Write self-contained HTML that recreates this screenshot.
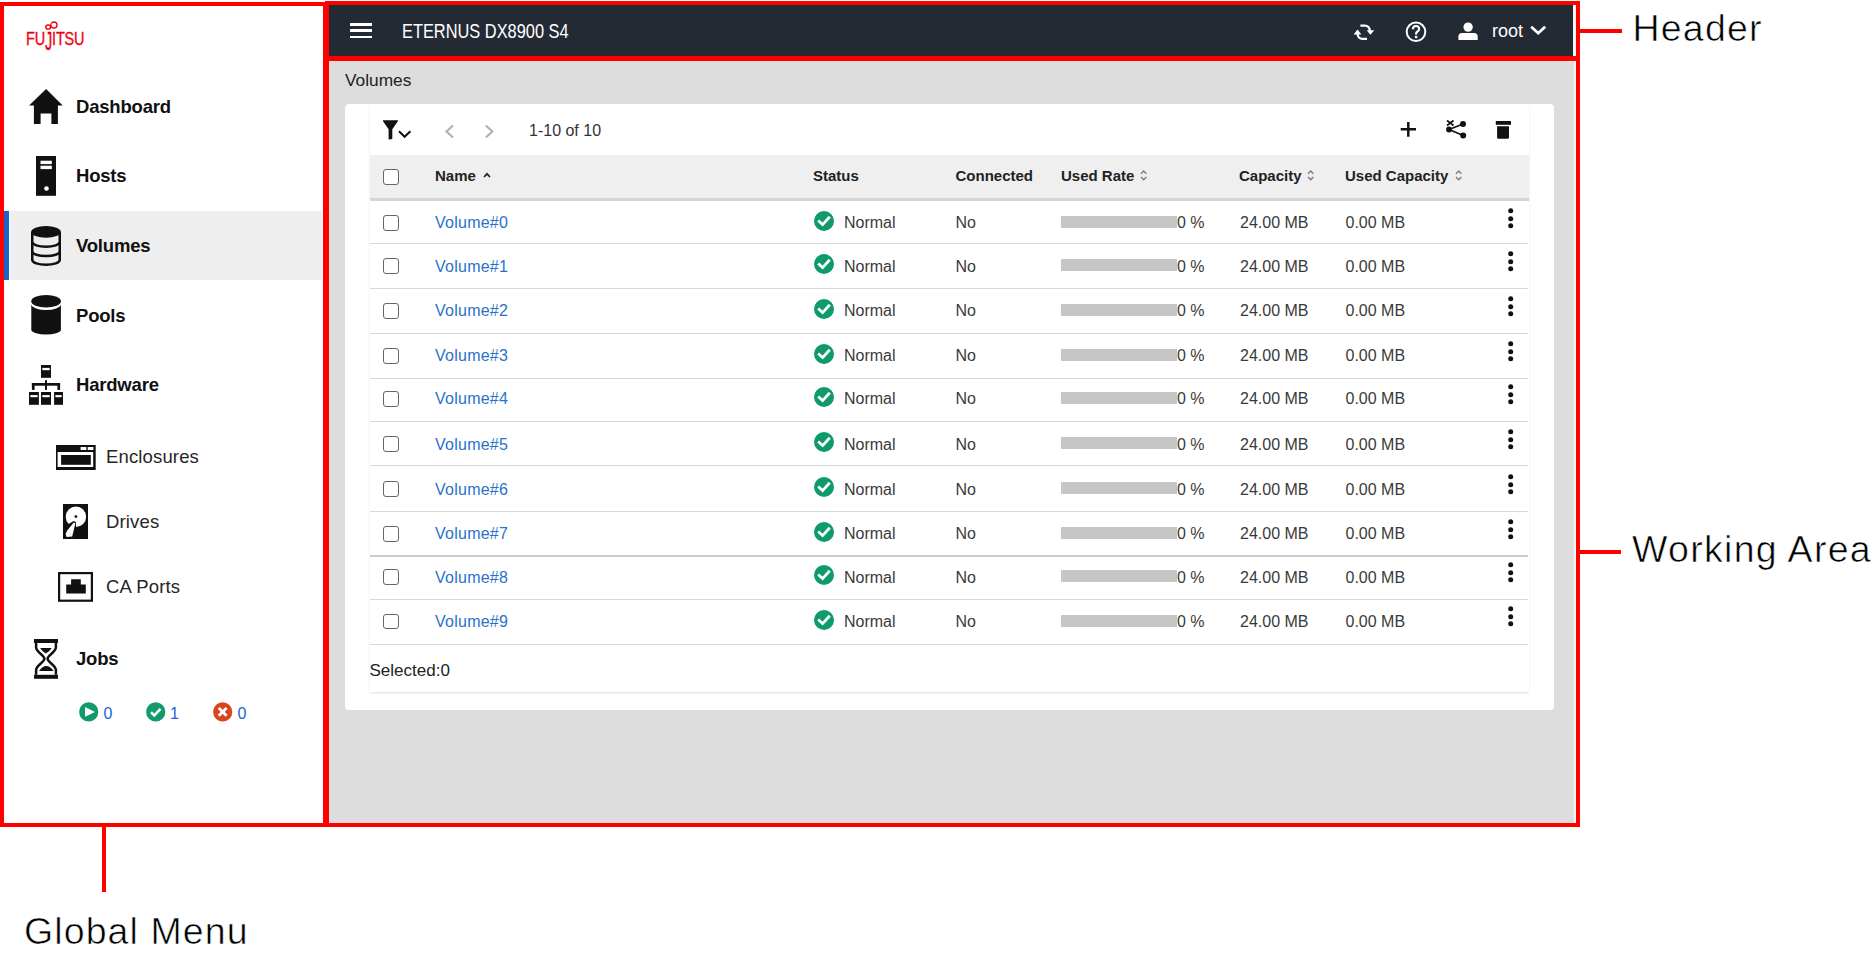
<!DOCTYPE html>
<html><head><meta charset="utf-8">
<style>
*{box-sizing:border-box;margin:0;padding:0}
html,body{width:1874px;height:955px;overflow:hidden;background:#fff;font-family:"Liberation Sans",sans-serif}
.a{position:absolute}
.t{position:absolute;white-space:nowrap;line-height:1}
.box{position:absolute;border:4.5px solid #ff0000}
/* sidebar */
.nav{font-weight:bold;font-size:18.5px;color:#111;letter-spacing:-0.2px}
.sub{font-size:18.5px;color:#262626;letter-spacing:0.15px}
.ann{font-size:37.5px;color:#000;letter-spacing:1.2px;-webkit-text-stroke:0.6px #fff}
.hd{font-weight:bold;font-size:15px;color:#222}
.cell{font-size:16px;color:#3a3a3a}
.link{color:#2a72c8;letter-spacing:0.25px}
.cb{position:absolute;width:15.5px;height:15.5px;border:1.6px solid #666;border-radius:3px;background:#fff}
.sep{position:absolute;left:370px;width:1158px;height:1px;background:#d6d9dc}
.bar{position:absolute;left:1061px;width:116px;height:12px;background:#c6c6c6}
</style></head><body>

<!-- ============ SIDEBAR ============ -->
<div class="a" style="left:4px;top:211px;width:5px;height:69px;background:#1a64c8"></div>
<div class="a" style="left:10px;top:211px;width:312px;height:69px;background:#eeeeee"></div>

<!-- logo -->
<div class="t" style="left:25.5px;top:29.3px;font-size:19px;color:#ee0011;transform:scaleX(0.76);transform-origin:0 0;letter-spacing:-0.2px;-webkit-text-stroke:0.35px #ee0011">FU<span style="display:inline-block;transform:scaleY(1.36);transform-origin:50% 16%">J</span>ITSU</div>
<svg class="a" style="left:44px;top:19px" width="15" height="12" viewBox="0 0 15 12"><circle cx="9.9" cy="6.1" r="3.1" fill="none" stroke="#ee0011" stroke-width="1.3"/><ellipse cx="4.15" cy="8.05" rx="2.4" ry="2.1" fill="none" stroke="#ee0011" stroke-width="1.4"/></svg>
<div class="t nav" style="left:76px;top:98.1px">Dashboard</div>
<div class="t nav" style="left:76px;top:167.2px">Hosts</div>
<div class="t nav" style="left:76px;top:237.2px">Volumes</div>
<div class="t nav" style="left:76px;top:307.2px">Pools</div>
<div class="t nav" style="left:76px;top:376.4px">Hardware</div>
<div class="t sub" style="left:106px;top:448.2px">Enclosures</div>
<div class="t sub" style="left:106px;top:513.0px">Drives</div>
<div class="t sub" style="left:106px;top:578.0px">CA Ports</div>
<div class="t nav" style="left:76px;top:650.2px">Jobs</div>

<!-- sidebar icons -->
<svg class="a" style="left:28px;top:88px" width="36" height="37" viewBox="0 0 36 37"><path d="M18.1 1.1 L34.7 17.4 L29.9 17.4 L29.9 35.9 L23.4 35.9 L23.4 25.5 L12.6 25.5 L12.6 35.9 L5.9 35.9 L5.9 17.4 L1.1 17.4 Z" fill="#111"/></svg>
<svg class="a" style="left:36px;top:156px" width="20" height="40" viewBox="0 0 20 40"><rect x="0" y="0" width="20" height="39.8" fill="#111"/><rect x="4.5" y="4.7" width="11.3" height="3.4" fill="#fff"/><rect x="4.5" y="9.7" width="11.3" height="3.4" fill="#fff"/><circle cx="10.5" cy="32.5" r="2.3" fill="#fff"/></svg>
<svg class="a" style="left:31px;top:226px" width="30" height="41" viewBox="0 0 30 41"><ellipse cx="15" cy="5.9" rx="14.9" ry="5.9" fill="#111"/><path d="M1.25 5.9 V34 A13.75 4.8 0 0 0 28.75 34 V5.9" fill="none" stroke="#111" stroke-width="2.5"/><path d="M1.25 16 A13.75 4.7 0 0 0 28.75 16" fill="none" stroke="#111" stroke-width="2.5"/><path d="M1.25 25.4 A13.75 4.7 0 0 0 28.75 25.4" fill="none" stroke="#111" stroke-width="2.5"/></svg>
<svg class="a" style="left:31px;top:294px" width="31" height="42" viewBox="0 0 31 42"><path d="M0.3 10.5 A14.85 6 0 0 0 29.9 10.5 L29.9 36 A14.85 4.8 0 0 1 0.3 36 Z" fill="#111"/><ellipse cx="15.1" cy="7.25" rx="14.85" ry="6.25" fill="#111"/></svg>
<svg class="a" style="left:28px;top:364px" width="36" height="42" viewBox="0 0 36 42"><g fill="#111"><rect x="13" y="1" width="10" height="12.8"/><rect x="17" y="16.2" width="2" height="9.7"/><rect x="3.9" y="19" width="28.2" height="2.7"/><rect x="3.9" y="19" width="2.7" height="6.9"/><rect x="29.4" y="19" width="2.7" height="6.9"/><rect x="1" y="28" width="9.9" height="12.8"/><rect x="13" y="28" width="10" height="12.8"/><rect x="26.1" y="28" width="8.9" height="12.8"/></g><g fill="#fff"><rect x="14.3" y="3.9" width="7.4" height="2.3"/><rect x="2.3" y="31.1" width="7.3" height="2.1"/><rect x="14.3" y="31.1" width="7.4" height="2.1"/><rect x="27.4" y="31.1" width="6.3" height="2.1"/></g></svg>
<svg class="a" style="left:56px;top:445px" width="40" height="25" viewBox="0 0 40 25"><rect x="0" y="0" width="39.7" height="25" fill="#111"/><rect x="1.6" y="7" width="35.6" height="15" fill="#fff"/><rect x="5.1" y="10" width="29.7" height="9.8" fill="#111"/><rect x="24.6" y="2" width="5.7" height="3" fill="#fff"/><rect x="31.7" y="2" width="5.7" height="3" fill="#fff"/></svg>
<svg class="a" style="left:63px;top:504px" width="25" height="35" viewBox="0 0 25 35"><rect x="0" y="0" width="25" height="35" fill="#111"/><circle cx="12.9" cy="12.7" r="10.2" fill="#fff"/><path d="M5.5 19.9 L10.7 17.0 L13.0 18.0 L13.0 24 L5 24 Z" fill="#111"/><path d="M10.8 18.6 L12.4 19.2 L9.2 32.6 L3.6 33 L2.6 30 L4.2 26.5 Z" fill="#fff"/><circle cx="12.9" cy="12.6" r="1.4" fill="#111"/></svg>
<svg class="a" style="left:58px;top:572px" width="35" height="30" viewBox="0 0 35 30"><rect x="1.1" y="1.1" width="32.8" height="27.6" fill="#fff" stroke="#111" stroke-width="2.2"/><path d="M13.1 7.2 H22.8 V12.4 H27.8 V21.6 H8.2 V12.4 H13.1 Z" fill="#111"/></svg>
<svg class="a" style="left:34px;top:639px" width="24" height="40" viewBox="0 0 24 40"><rect x="0" y="0" width="24" height="4" fill="#111"/><rect x="0" y="35.8" width="24" height="4" fill="#111"/><path d="M2.1 4 V8.5 C2.1 13 10.4 16.5 10.4 19.7 C10.4 23 2.1 26.5 2.1 31 V35.8" fill="none" stroke="#111" stroke-width="2.5"/><path d="M21.9 4 V8.5 C21.9 13 13.6 16.5 13.6 19.7 C13.6 23 21.9 26.5 21.9 31 V35.8" fill="none" stroke="#111" stroke-width="2.5"/><path d="M6.1 8.9 H17.7 Q15 13 11.9 14.6 Q8.8 13 6.1 8.9 Z" fill="#111"/><path d="M5 31.9 H19.7 Q16 27 12.3 27 Q8.6 27 5 31.9 Z" fill="#111"/></svg>
<!-- job status -->
<svg class="a" style="left:79px;top:702px" width="20" height="20" viewBox="0 0 20 20"><circle cx="9.7" cy="9.9" r="9.6" fill="#119a6d"/><path d="M6 5 L6 14.7 L16 9.9 Z" fill="#fff"/></svg>
<div class="t" style="left:103.5px;top:705.9px;font-size:16px;color:#2461d6">0</div>
<svg class="a" style="left:146px;top:702px" width="20" height="20" viewBox="0 0 20 20"><circle cx="9.7" cy="9.9" r="9.6" fill="#119a6d"/><path d="M5 10.3 L8.3 13.4 L14.5 6.8" fill="none" stroke="#fff" stroke-width="2.6"/></svg>
<div class="t" style="left:170px;top:705.9px;font-size:16px;color:#2461d6">1</div>
<svg class="a" style="left:213px;top:702px" width="20" height="20" viewBox="0 0 20 20"><circle cx="9.7" cy="9.9" r="9.6" fill="#d9441c"/><path d="M5.8 6 L13.6 13.8 M13.6 6 L5.8 13.8" fill="none" stroke="#fff" stroke-width="2.8"/></svg>
<div class="t" style="left:237.5px;top:705.9px;font-size:16px;color:#2461d6">0</div>


<!-- ============ HEADER ============ -->
<div class="a" style="left:329px;top:5px;width:1244px;height:51px;background:#232a34"></div>
<div class="a" style="left:329px;top:60px;width:1247px;height:763px;background:#dddddd"></div>

<div class="a" style="left:350px;top:23px;width:21.5px;height:2.6px;background:#fff"></div>
<div class="a" style="left:350px;top:29.3px;width:21.5px;height:2.6px;background:#fff"></div>
<div class="a" style="left:350px;top:35.5px;width:21.5px;height:2.6px;background:#fff"></div>
<div class="t" style="left:402px;top:20.2px;font-size:21px;color:#fff;transform:scaleX(0.78);transform-origin:0 0">ETERNUS DX8900 S4</div>
<div class="t" style="left:1492px;top:21.5px;font-size:18px;color:#fff">root</div>

<!-- header icons -->
<svg class="a" style="left:1353px;top:23.5px" width="22" height="17" viewBox="0 0 22 17"><g fill="none" stroke="#fff" stroke-width="2.3"><path d="M7.4 1.6 H12 A4.8 4.8 0 0 1 16.8 6.4 V7"/><path d="M14 14.8 H9.4 A4.8 4.8 0 0 1 4.6 10 V9.4"/></g><g fill="#fff"><path d="M13.6 6.2 H21.3 L17.4 10.8 Z"/><path d="M0.6 10.4 H8.4 L4.5 5.6 Z"/></g></svg>
<svg class="a" style="left:1405px;top:21px" width="22" height="22" viewBox="0 0 22 22"><circle cx="11" cy="10.8" r="9.3" fill="none" stroke="#fff" stroke-width="2"/><path d="M7.9 8.2 Q7.9 5 11 5 Q14.1 5 14.1 7.9 Q14.1 9.5 12.4 10.5 Q11.1 11.3 11.1 12.8 V13.4" fill="none" stroke="#fff" stroke-width="2.2"/><rect x="9.9" y="14.8" width="2.4" height="2.4" fill="#fff"/></svg>
<svg class="a" style="left:1458px;top:22px" width="20" height="18" viewBox="0 0 20 18"><circle cx="10.1" cy="5.1" r="4.7" fill="#fff"/><path d="M0.4 17.9 V14.5 Q0.4 10.9 4 10.9 H16 Q19.7 10.9 19.7 14.5 V17.9 Z" fill="#fff"/></svg>
<svg class="a" style="left:1529px;top:24px" width="19" height="12" viewBox="0 0 19 12"><path d="M2.2 2.8 L9.2 9.2 L16.2 2.8" fill="none" stroke="#fff" stroke-width="2.8"/></svg>
<!-- ============ WORK AREA ============ -->
<div class="t" style="left:345px;top:71.6px;font-size:17.3px;color:#222">Volumes</div>
<div class="a" style="left:345px;top:104px;width:1209px;height:606px;background:#fff;border-radius:4px"></div>
<div class="a" style="left:370px;top:104px;width:1158.5px;height:587.5px;background:#fff;box-shadow:0 1px 2px rgba(0,0,0,0.12)"></div>
<div class="a" style="left:370px;top:154.5px;width:1158.5px;height:44px;background:#efefef"></div>
<div class="a" style="left:370px;top:198px;width:1158.5px;height:3px;background:#d2d6da"></div>

<div class="t" style="left:529px;top:123.4px;font-size:16px;color:#333">1-10 of 10</div>

<div class="cb" style="left:383.3px;top:169.2px"></div>
<div class="t hd" style="left:435px;top:168.1px">Name</div>
<div class="t hd" style="left:813px;top:168.4px">Status</div>
<div class="t hd" style="left:955.5px;top:168.4px">Connected</div>
<div class="t hd" style="left:1061px;top:168.4px">Used Rate</div>
<div class="t hd" style="left:1239px;top:168.4px">Capacity</div>
<div class="t hd" style="left:1345px;top:168.4px">Used Capacity</div>

<!-- toolbar icons -->
<svg class="a" style="left:382px;top:119px" width="31" height="21" viewBox="0 0 31 21"><path d="M1 1.2 H15.9 V2.2 L10.3 10.3 V20 L6.6 20.4 V10.3 L1 2.2 Z" fill="#111"/><path d="M17 12.2 L22.6 17.8 L28.4 12.2" fill="none" stroke="#111" stroke-width="2"/></svg>
<svg class="a" style="left:443px;top:123px" width="14" height="17" viewBox="0 0 14 17"><path d="M10 2.5 L3.5 8.5 L10 14.5" fill="none" stroke="#abb3bb" stroke-width="2.2"/></svg>
<svg class="a" style="left:482px;top:123px" width="14" height="17" viewBox="0 0 14 17"><path d="M3.8 2.5 L10.3 8.5 L3.8 14.5" fill="none" stroke="#abb3bb" stroke-width="2.2"/></svg>
<svg class="a" style="left:1400px;top:121px" width="17" height="17" viewBox="0 0 17 17"><path d="M8.3 1 V15.8 M0.7 8.3 H16" fill="none" stroke="#111" stroke-width="2.5"/></svg>
<svg class="a" style="left:1445px;top:119px" width="23" height="21" viewBox="0 0 23 21"><g fill="#111"><circle cx="4" cy="10.5" r="2.9"/><circle cx="18" cy="5" r="3"/><circle cx="18.2" cy="16.6" r="3"/></g><path d="M4 10.5 L18 5 M4 10.5 L18.2 16.6" stroke="#111" stroke-width="1.6"/><path d="M2 1.5 L8.5 6.5 M8.5 1.5 L2 6.5" stroke="#111" stroke-width="1.6"/></svg>
<svg class="a" style="left:1495px;top:120px" width="17" height="20" viewBox="0 0 17 20"><rect x="0.8" y="1" width="15.2" height="3.8" fill="#111"/><path d="M2.1 6.2 H14 V17.2 Q14 18.7 12.5 18.7 H3.6 Q2.1 18.7 2.1 17.2 Z" fill="#111"/></svg>
<!-- sort icons -->
<svg class="a" style="left:482px;top:171px" width="10" height="8" viewBox="0 0 10 8"><path d="M2 6 L5 2.8 L8 6" fill="none" stroke="#222" stroke-width="1.7"/></svg>
<svg class="a" style="left:1139px;top:168px" width="10" height="15" viewBox="0 0 10 15"><path d="M2 5.8 L4.7 3 L7.4 5.8 M2 9 L4.7 11.8 L7.4 9" fill="none" stroke="#7a7a7a" stroke-width="1.3"/></svg>
<svg class="a" style="left:1306px;top:168px" width="10" height="15" viewBox="0 0 10 15"><path d="M2 5.8 L4.7 3 L7.4 5.8 M2 9 L4.7 11.8 L7.4 9" fill="none" stroke="#7a7a7a" stroke-width="1.3"/></svg>
<svg class="a" style="left:1453.5px;top:168px" width="10" height="15" viewBox="0 0 10 15"><path d="M2 5.8 L4.7 3 L7.4 5.8 M2 9 L4.7 11.8 L7.4 9" fill="none" stroke="#7a7a7a" stroke-width="1.3"/></svg>


<!-- ROWS -->
<div class="cb" style="left:383.3px;top:215.10px"></div>
<div class="t cell link" style="left:435px;top:214.75px">Volume#0</div>
<svg class="a" style="left:813.8px;top:210.70px" width="20" height="20" viewBox="0 0 20 20"><circle cx="10" cy="10" r="10" fill="#0f9a6c"/><path d="M5.2 10.4 L8.6 13.6 L14.8 6.8" fill="none" stroke="#fff" stroke-width="2.8" stroke-linecap="square"/></svg>
<div class="t cell" style="left:844px;top:214.75px">Normal</div>
<div class="t cell" style="left:955.5px;top:214.75px">No</div>
<div class="bar" style="top:215.70px"></div>
<div class="t cell" style="left:1177px;top:214.75px">0 %</div>
<div class="t cell" style="left:1240px;top:214.75px">24.00 MB</div>
<div class="t cell" style="left:1345.5px;top:214.75px">0.00 MB</div>
<svg class="a" style="left:1508px;top:207.60px" width="6" height="21" viewBox="0 0 6 21"><circle cx="2.7" cy="2.8" r="2.5" fill="#111"/><circle cx="2.7" cy="10.7" r="2.5" fill="#111"/><circle cx="2.7" cy="17.7" r="2.5" fill="#111"/></svg>
<div class="sep" style="top:242.60px;height:1px;background:#d6d9dc"></div>
<div class="cb" style="left:383.3px;top:258.40px"></div>
<div class="t cell link" style="left:435px;top:258.50px">Volume#1</div>
<svg class="a" style="left:813.8px;top:254.00px" width="20" height="20" viewBox="0 0 20 20"><circle cx="10" cy="10" r="10" fill="#0f9a6c"/><path d="M5.2 10.4 L8.6 13.6 L14.8 6.8" fill="none" stroke="#fff" stroke-width="2.8" stroke-linecap="square"/></svg>
<div class="t cell" style="left:844px;top:258.50px">Normal</div>
<div class="t cell" style="left:955.5px;top:258.50px">No</div>
<div class="bar" style="top:259.00px"></div>
<div class="t cell" style="left:1177px;top:258.50px">0 %</div>
<div class="t cell" style="left:1240px;top:258.50px">24.00 MB</div>
<div class="t cell" style="left:1345.5px;top:258.50px">0.00 MB</div>
<svg class="a" style="left:1508px;top:250.90px" width="6" height="21" viewBox="0 0 6 21"><circle cx="2.7" cy="2.8" r="2.5" fill="#111"/><circle cx="2.7" cy="10.7" r="2.5" fill="#111"/><circle cx="2.7" cy="17.7" r="2.5" fill="#111"/></svg>
<div class="sep" style="top:287.90px;height:1px;background:#d6d9dc"></div>
<div class="cb" style="left:383.3px;top:303.00px"></div>
<div class="t cell link" style="left:435px;top:303.05px">Volume#2</div>
<svg class="a" style="left:813.8px;top:298.60px" width="20" height="20" viewBox="0 0 20 20"><circle cx="10" cy="10" r="10" fill="#0f9a6c"/><path d="M5.2 10.4 L8.6 13.6 L14.8 6.8" fill="none" stroke="#fff" stroke-width="2.8" stroke-linecap="square"/></svg>
<div class="t cell" style="left:844px;top:303.05px">Normal</div>
<div class="t cell" style="left:955.5px;top:303.05px">No</div>
<div class="bar" style="top:303.60px"></div>
<div class="t cell" style="left:1177px;top:303.05px">0 %</div>
<div class="t cell" style="left:1240px;top:303.05px">24.00 MB</div>
<div class="t cell" style="left:1345.5px;top:303.05px">0.00 MB</div>
<svg class="a" style="left:1508px;top:295.50px" width="6" height="21" viewBox="0 0 6 21"><circle cx="2.7" cy="2.8" r="2.5" fill="#111"/><circle cx="2.7" cy="10.7" r="2.5" fill="#111"/><circle cx="2.7" cy="17.7" r="2.5" fill="#111"/></svg>
<div class="sep" style="top:332.90px;height:1px;background:#d6d9dc"></div>
<div class="cb" style="left:383.3px;top:348.00px"></div>
<div class="t cell link" style="left:435px;top:347.95px">Volume#3</div>
<svg class="a" style="left:813.8px;top:343.60px" width="20" height="20" viewBox="0 0 20 20"><circle cx="10" cy="10" r="10" fill="#0f9a6c"/><path d="M5.2 10.4 L8.6 13.6 L14.8 6.8" fill="none" stroke="#fff" stroke-width="2.8" stroke-linecap="square"/></svg>
<div class="t cell" style="left:844px;top:347.95px">Normal</div>
<div class="t cell" style="left:955.5px;top:347.95px">No</div>
<div class="bar" style="top:348.60px"></div>
<div class="t cell" style="left:1177px;top:347.95px">0 %</div>
<div class="t cell" style="left:1240px;top:347.95px">24.00 MB</div>
<div class="t cell" style="left:1345.5px;top:347.95px">0.00 MB</div>
<svg class="a" style="left:1508px;top:340.50px" width="6" height="21" viewBox="0 0 6 21"><circle cx="2.7" cy="2.8" r="2.5" fill="#111"/><circle cx="2.7" cy="10.7" r="2.5" fill="#111"/><circle cx="2.7" cy="17.7" r="2.5" fill="#111"/></svg>
<div class="sep" style="top:377.90px;height:1px;background:#d6d9dc"></div>
<div class="cb" style="left:383.3px;top:391.30px"></div>
<div class="t cell link" style="left:435px;top:391.40px">Volume#4</div>
<svg class="a" style="left:813.8px;top:386.90px" width="20" height="20" viewBox="0 0 20 20"><circle cx="10" cy="10" r="10" fill="#0f9a6c"/><path d="M5.2 10.4 L8.6 13.6 L14.8 6.8" fill="none" stroke="#fff" stroke-width="2.8" stroke-linecap="square"/></svg>
<div class="t cell" style="left:844px;top:391.40px">Normal</div>
<div class="t cell" style="left:955.5px;top:391.40px">No</div>
<div class="bar" style="top:391.90px"></div>
<div class="t cell" style="left:1177px;top:391.40px">0 %</div>
<div class="t cell" style="left:1240px;top:391.40px">24.00 MB</div>
<div class="t cell" style="left:1345.5px;top:391.40px">0.00 MB</div>
<svg class="a" style="left:1508px;top:383.80px" width="6" height="21" viewBox="0 0 6 21"><circle cx="2.7" cy="2.8" r="2.5" fill="#111"/><circle cx="2.7" cy="10.7" r="2.5" fill="#111"/><circle cx="2.7" cy="17.7" r="2.5" fill="#111"/></svg>
<div class="sep" style="top:420.70px;height:1px;background:#d6d9dc"></div>
<div class="cb" style="left:383.3px;top:436.40px"></div>
<div class="t cell link" style="left:435px;top:436.75px">Volume#5</div>
<svg class="a" style="left:813.8px;top:432.00px" width="20" height="20" viewBox="0 0 20 20"><circle cx="10" cy="10" r="10" fill="#0f9a6c"/><path d="M5.2 10.4 L8.6 13.6 L14.8 6.8" fill="none" stroke="#fff" stroke-width="2.8" stroke-linecap="square"/></svg>
<div class="t cell" style="left:844px;top:436.75px">Normal</div>
<div class="t cell" style="left:955.5px;top:436.75px">No</div>
<div class="bar" style="top:437.00px"></div>
<div class="t cell" style="left:1177px;top:436.75px">0 %</div>
<div class="t cell" style="left:1240px;top:436.75px">24.00 MB</div>
<div class="t cell" style="left:1345.5px;top:436.75px">0.00 MB</div>
<svg class="a" style="left:1508px;top:428.90px" width="6" height="21" viewBox="0 0 6 21"><circle cx="2.7" cy="2.8" r="2.5" fill="#111"/><circle cx="2.7" cy="10.7" r="2.5" fill="#111"/><circle cx="2.7" cy="17.7" r="2.5" fill="#111"/></svg>
<div class="sep" style="top:465.30px;height:1px;background:#d6d9dc"></div>
<div class="cb" style="left:383.3px;top:481.40px"></div>
<div class="t cell link" style="left:435px;top:481.50px">Volume#6</div>
<svg class="a" style="left:813.8px;top:477.00px" width="20" height="20" viewBox="0 0 20 20"><circle cx="10" cy="10" r="10" fill="#0f9a6c"/><path d="M5.2 10.4 L8.6 13.6 L14.8 6.8" fill="none" stroke="#fff" stroke-width="2.8" stroke-linecap="square"/></svg>
<div class="t cell" style="left:844px;top:481.50px">Normal</div>
<div class="t cell" style="left:955.5px;top:481.50px">No</div>
<div class="bar" style="top:482.00px"></div>
<div class="t cell" style="left:1177px;top:481.50px">0 %</div>
<div class="t cell" style="left:1240px;top:481.50px">24.00 MB</div>
<div class="t cell" style="left:1345.5px;top:481.50px">0.00 MB</div>
<svg class="a" style="left:1508px;top:473.90px" width="6" height="21" viewBox="0 0 6 21"><circle cx="2.7" cy="2.8" r="2.5" fill="#111"/><circle cx="2.7" cy="10.7" r="2.5" fill="#111"/><circle cx="2.7" cy="17.7" r="2.5" fill="#111"/></svg>
<div class="sep" style="top:510.50px;height:1px;background:#d6d9dc"></div>
<div class="cb" style="left:383.3px;top:526.00px"></div>
<div class="t cell link" style="left:435px;top:526.10px">Volume#7</div>
<svg class="a" style="left:813.8px;top:521.60px" width="20" height="20" viewBox="0 0 20 20"><circle cx="10" cy="10" r="10" fill="#0f9a6c"/><path d="M5.2 10.4 L8.6 13.6 L14.8 6.8" fill="none" stroke="#fff" stroke-width="2.8" stroke-linecap="square"/></svg>
<div class="t cell" style="left:844px;top:526.10px">Normal</div>
<div class="t cell" style="left:955.5px;top:526.10px">No</div>
<div class="bar" style="top:526.60px"></div>
<div class="t cell" style="left:1177px;top:526.10px">0 %</div>
<div class="t cell" style="left:1240px;top:526.10px">24.00 MB</div>
<div class="t cell" style="left:1345.5px;top:526.10px">0.00 MB</div>
<svg class="a" style="left:1508px;top:518.50px" width="6" height="21" viewBox="0 0 6 21"><circle cx="2.7" cy="2.8" r="2.5" fill="#111"/><circle cx="2.7" cy="10.7" r="2.5" fill="#111"/><circle cx="2.7" cy="17.7" r="2.5" fill="#111"/></svg>
<div class="sep" style="top:554.90px;height:2px;background:#c9cdd1"></div>
<div class="cb" style="left:383.3px;top:569.30px"></div>
<div class="t cell link" style="left:435px;top:569.65px">Volume#8</div>
<svg class="a" style="left:813.8px;top:564.90px" width="20" height="20" viewBox="0 0 20 20"><circle cx="10" cy="10" r="10" fill="#0f9a6c"/><path d="M5.2 10.4 L8.6 13.6 L14.8 6.8" fill="none" stroke="#fff" stroke-width="2.8" stroke-linecap="square"/></svg>
<div class="t cell" style="left:844px;top:569.65px">Normal</div>
<div class="t cell" style="left:955.5px;top:569.65px">No</div>
<div class="bar" style="top:569.90px"></div>
<div class="t cell" style="left:1177px;top:569.65px">0 %</div>
<div class="t cell" style="left:1240px;top:569.65px">24.00 MB</div>
<div class="t cell" style="left:1345.5px;top:569.65px">0.00 MB</div>
<svg class="a" style="left:1508px;top:561.80px" width="6" height="21" viewBox="0 0 6 21"><circle cx="2.7" cy="2.8" r="2.5" fill="#111"/><circle cx="2.7" cy="10.7" r="2.5" fill="#111"/><circle cx="2.7" cy="17.7" r="2.5" fill="#111"/></svg>
<div class="sep" style="top:598.90px;height:1px;background:#d6d9dc"></div>
<div class="cb" style="left:383.3px;top:613.90px"></div>
<div class="t cell link" style="left:435px;top:614.35px">Volume#9</div>
<svg class="a" style="left:813.8px;top:609.50px" width="20" height="20" viewBox="0 0 20 20"><circle cx="10" cy="10" r="10" fill="#0f9a6c"/><path d="M5.2 10.4 L8.6 13.6 L14.8 6.8" fill="none" stroke="#fff" stroke-width="2.8" stroke-linecap="square"/></svg>
<div class="t cell" style="left:844px;top:614.35px">Normal</div>
<div class="t cell" style="left:955.5px;top:614.35px">No</div>
<div class="bar" style="top:614.50px"></div>
<div class="t cell" style="left:1177px;top:614.35px">0 %</div>
<div class="t cell" style="left:1240px;top:614.35px">24.00 MB</div>
<div class="t cell" style="left:1345.5px;top:614.35px">0.00 MB</div>
<svg class="a" style="left:1508px;top:606.40px" width="6" height="21" viewBox="0 0 6 21"><circle cx="2.7" cy="2.8" r="2.5" fill="#111"/><circle cx="2.7" cy="10.7" r="2.5" fill="#111"/><circle cx="2.7" cy="17.7" r="2.5" fill="#111"/></svg>
<div class="sep" style="top:644.00px;height:1px;background:#d6d9dc"></div>
<!-- /ROWS -->

<div class="t" style="left:369.5px;top:661.6px;font-size:17px;color:#222">Selected:0</div>

<div class="a" style="left:1573px;top:5px;width:3px;height:52px;background:#f4f4f4"></div>
<div class="a" style="left:1574px;top:60px;width:2px;height:763px;background:#f4f4f4"></div>
<!-- ============ RED ANNOTATION BOXES ============ -->
<div class="box" style="left:0;top:1.5px;width:326.5px;height:825.5px"></div>
<div class="box" style="left:325px;top:0.5px;width:1255px;height:60px"></div>
<div class="box" style="left:325px;top:55.8px;width:1255px;height:771px"></div>
<div class="a" style="left:1580px;top:28.6px;width:42px;height:4.4px;background:#ff0000"></div>
<div class="a" style="left:1580px;top:549.8px;width:40.5px;height:4.4px;background:#ff0000"></div>
<div class="a" style="left:102px;top:826px;width:4.4px;height:66px;background:#ff0000"></div>
<div class="t ann" style="left:1632.5px;top:10.2px">Header</div>
<div class="t ann" style="left:1632px;top:531.2px;letter-spacing:1.3px">Working Area</div>
<div class="t ann" style="left:24px;top:912.6px;letter-spacing:1.1px">Global Menu</div>

</body></html>
